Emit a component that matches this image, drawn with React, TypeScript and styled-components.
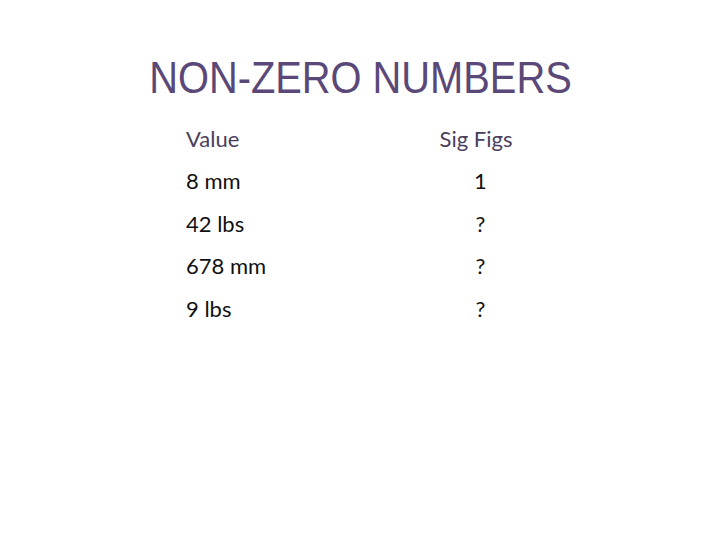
import React from "react";
import styled, { createGlobalStyle } from "styled-components";

const Global = createGlobalStyle`
  html, body { margin: 0; padding: 0; background: #ffffff; }
  #root { width: 720px; height: 540px; }
`;

const Slide = styled.div`
  width: 720px;
  height: 540px;
  display: flex;
  flex-direction: column;
  align-items: center;
  background: #fff;
`;

const Title = styled.h1`
  margin: 53px 0 0 0;
  font-family: "Liberation Sans", Arial, sans-serif;
  font-weight: 400;
  font-size: 44px;
  line-height: 50px;
  color: #5a4878;
  transform: scaleX(0.905);
  white-space: nowrap;
`;

const Table = styled.div`
  align-self: flex-start;
  margin: 14px 0 0 186px;
  display: grid;
  grid-template-columns: 240px 100px;
  grid-auto-rows: 42.5px;
  align-items: center;
  font-family: Lato, "Open Sans", sans-serif;
  font-size: 22px;
`;

const Cell = styled.div<{ $head?: boolean; $center?: boolean; $shift?: number }>`
  color: ${(p) => (p.$head ? "#4a3f5c" : "#111111")};
  text-align: ${(p) => (p.$center ? "center" : "left")};
  padding-left: ${(p) => p.$shift ?? 0}px;
  white-space: nowrap;
`;

const rows: [string, string][] = [
  ["8 mm", "1"],
  ["42 lbs", "?"],
  ["678 mm", "?"],
  ["9 lbs", "?"],
];

export default function App() {
  return (
    <>
      <Global />
      <Slide>
        <Title>NON-ZERO NUMBERS</Title>
        <Table>
          <Cell $head>Value</Cell>
          <Cell $head $center>Sig Figs</Cell>
          {rows.map(([v, s]) => (
            <React.Fragment key={v}>
              <Cell>{v}</Cell>
              <Cell $center $shift={9}>{s}</Cell>
            </React.Fragment>
          ))}
        </Table>
      </Slide>
    </>
  );
}
